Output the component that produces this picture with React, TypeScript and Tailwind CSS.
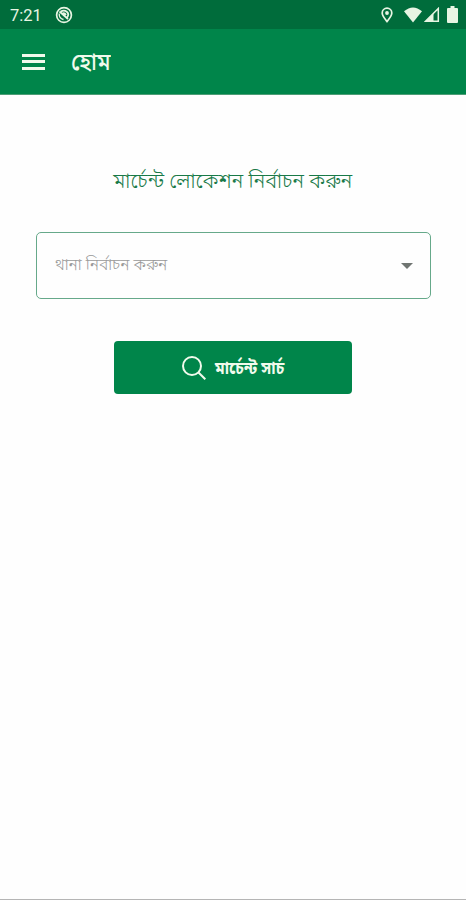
const bengali = "font-['Noto_Sans_Bengali','Noto_Sans',sans-serif]";

function StatusBar() {
  return (
    <div className="flex h-[29px] items-center bg-[#006c3b] pl-2.5 pr-2 text-[#e8f5e3]">
      <span className="w-[45px] pt-[3px] font-['Roboto',sans-serif] text-[16.5px] leading-none">7:21</span>
      <svg className="h-[18px] w-[18px]" viewBox="0 0 18 18" fill="none" stroke="currentColor">
        <circle cx="9" cy="9" r="7.400" strokeWidth="1.700" />
        <path d="M5.800 5.600Q9 3.600 11.800 5.800T12 11.800" strokeWidth="1.800" />
        <path d="M4.200 7.500Q4 12.500 8.500 13.500" strokeWidth="1.300" />
        <path d="M4.500 5.500 13 13M7.500 7.500Q9.500 6.500 11 9" strokeWidth="1.800" />
      </svg>
      <svg className="ml-auto h-4 w-3" viewBox="0 0 12 16" fill="none" stroke="currentColor" strokeWidth="1.700">
        <path d="M6 14.500C3.500 11.200 1.200 8.800 1.200 6a4.800 4.800 0 0 1 9.600 0c0 2.800-2.300 5.200-4.800 8.500Z" />
        <circle cx="6" cy="6" r="1.900" fill="currentColor" stroke="none" />
      </svg>
      <svg className="ml-[11px] h-4 w-[18px]" viewBox="0 0 18 16" fill="currentColor">
        <path d="M0 4.300Q9-3.300 18 4.300L9 15.500Z" />
      </svg>
      <svg className="ml-0.5 h-4 w-4" viewBox="0 0 16 16" fill="none" stroke="currentColor" strokeWidth="1.500">
        <path d="M1.500 14.300 14.300 1.500V14.300Z" />
        <path d="M2 14 9.500 6.500V14Z" fill="currentColor" stroke="none" />
      </svg>
      <svg className="ml-[7px] h-[17px] w-[11px]" viewBox="0 0 11 17" fill="currentColor">
        <path d="M3.500 0h4v2H10q1 0 1 1v13q0 1-1 1H1q-1 0-1-1V3q0-1 1-1h2.500Z" />
      </svg>
    </div>
  );
}

export default function App() {
  return (
    <div className={`flex h-[900px] w-[466px] flex-col border-b border-[#b5b5b5] bg-[#fefefe] ${bengali}`}>
      <StatusBar />
      <header className="flex h-[66px] items-center border-b border-[#4d9d76] bg-[#00854a] pl-[22px] text-[#f1faec]">
        <button aria-label="Menu" className="flex w-[23px] flex-col gap-[3.500px]">
          <span className="h-[3px] bg-current" />
          <span className="h-[3px] bg-current" />
          <span className="h-[3px] bg-current" />
        </button>
        <h1 className="ml-[26px] origin-center scale-y-110 whitespace-nowrap pt-[4px] text-[22px] font-medium leading-none">হোম</h1>
      </header>
      <main className="flex flex-col items-center">
        <h2 className="mt-[68px] flex h-[36px] scale-x-[0.957] items-center whitespace-nowrap pt-[5px] text-[21px] font-light leading-none text-[#187947]">মার্চেন্ট লোকেশন নির্বাচন করুন</h2>
        <button className="mt-[33px] flex h-[67px] w-[395px] items-center justify-between rounded-[5px] border border-[#66a98a] pl-[18px] pr-[17px] text-[#999]">
          <span className="origin-left scale-x-[0.985] scale-y-105 whitespace-nowrap pt-px text-[16px] font-light leading-none">থানা নির্বাচন করুন</span>
          <svg className="h-1.5 w-3" viewBox="0 0 12 6" fill="#707572"><path d="M0 0h12L6 6Z" /></svg>
        </button>
        <button className="mt-[42px] flex h-[53px] w-[238px] items-center rounded-[4px] bg-[#00854a] pl-[68px] text-[#f1faec]">
          <svg className="h-6 w-6 shrink-0" viewBox="0 0 24 24" fill="none" stroke="currentColor" strokeWidth="2">
            <circle cx="10" cy="10" r="9" /><path d="m16.500 16.500 6.800 6.800" />
          </svg>
          <span className="ml-[9px] origin-left scale-x-[0.97] scale-y-110 whitespace-nowrap pt-[2px] text-[16px] font-bold leading-none">মার্চেন্ট সার্চ</span>
        </button>
      </main>
    </div>
  );
}
